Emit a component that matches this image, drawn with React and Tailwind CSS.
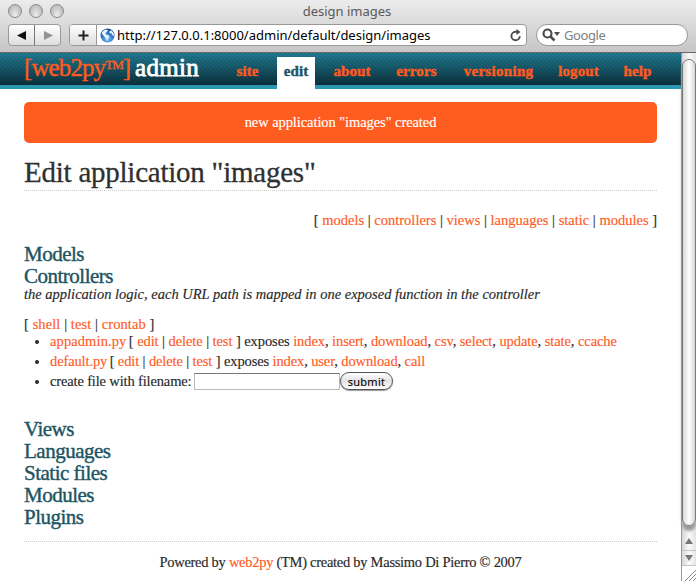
import React from "react";

const serif = "font-['Liberation_Serif',serif]";
const sans = "font-['Noto_Sans',sans-serif]";

function A({ children }) {
  return <a className="text-[#ff5b1f]">{children}</a>;
}

function Links({ items, sep }) {
  return items.map((t, i) => (
    <React.Fragment key={t}>
      {i > 0 && sep}
      <A>{t}</A>
    </React.Fragment>
  ));
}

function Chrome() {
  return (
    <div className={`h-[53px] border-b border-[#686868] bg-linear-to-b from-[#ececec] to-[#c6c6c6] ${sans}`}>
      <div className="flex h-6 items-center">
        <div className="flex w-[100px] gap-[7px] pl-2">
          {[0, 1, 2].map((i) => (
            <span key={i} className="mt-[-2px] h-[14px] w-[14px] rounded-full border border-[#8b8b8b] bg-radial-[at_50%_85%] from-[#eeeeee] to-[#acacac]" />
          ))}
        </div>
        <div className="mt-[-2px] w-[494px] text-center text-[13px] leading-6 text-[#585858]">design images</div>
      </div>
      <div className="flex h-[22px] pl-2">
        <div className="flex h-[22px] w-[53px] rounded-[4px] border border-[#999] bg-linear-to-b from-white to-[#dedede]">
          <div className="flex w-[26px] items-center justify-center border-r border-[#777]">
            <svg width="10" height="10"><path d="M9 1v9L0 5.500z" fill="#111" /></svg>
          </div>
          <div className="flex w-[25px] items-center justify-center">
            <svg width="10" height="10"><path d="M1 1v9l9-4.500z" fill="#929292" /></svg>
          </div>
        </div>
        <div className="ml-2 flex h-[22px] w-[458px] rounded-[4px] border border-[#999] bg-white">
          <div className="flex w-[27px] items-center justify-center rounded-l-[3px] border-r border-[#999] bg-linear-to-b from-white to-[#dedede]">
            <svg width="11" height="11"><path d="M5.500 0.500v10M0.500 5.500h10" stroke="#222" strokeWidth="2" /></svg>
          </div>
          <div className="flex items-center pl-[3px]">
            <svg width="15" height="15" viewBox="0 0 15 15">
              <defs>
                <radialGradient id="globe" cx="50%" cy="75%" r="75%">
                  <stop offset="0" stopColor="#80c8ff" />
                  <stop offset="0.500" stopColor="#347ec9" />
                  <stop offset="1" stopColor="#123d80" />
                </radialGradient>
              </defs>
              <circle cx="7.500" cy="7.500" r="7" fill="url(#globe)" />
              <path d="M2 4l3-2.500 3 .5-1 2-1.500 1 .5 1.500 2 .5 1.500 1.500-1.500 2-1 2.500-1.500-3L4 8 2 6zM9.500 3l2-.5 2 2.500.5 3-1.500-.5-1-2-2-.5z" fill="#e3f3ff" />
            </svg>
          </div>
          <div className="w-[395px] pl-[2px] text-[13px] leading-[20px] text-black">
            http://127.0.0.1:8000/admin/default/design/images
          </div>
          <div className="flex items-center">
            <svg width="12" height="13" viewBox="0 0 12 13" fill="none">
              <path d="M9.800 7.200a4.200 4.200 0 1 1-4.300-4.400h2" stroke="#4c4c4c" strokeWidth="1.900" />
              <path d="M6.500 0l4 3-4 3z" fill="#4c4c4c" />
            </svg>
          </div>
        </div>
        <div className="ml-[9px] flex h-[22px] w-[152px] items-center rounded-full border border-[#999] bg-white pl-[5px]">
          <svg width="19" height="14" viewBox="0 0 19 14">
            <circle cx="5.500" cy="5.500" r="4" fill="none" stroke="#4c4c4c" strokeWidth="2.200" />
            <path d="M8.500 8.500l4 4" stroke="#4c4c4c" strokeWidth="2.500" />
            <path d="M12 4h6l-3 4z" fill="#4c4c4c" />
          </svg>
          <span className="pl-[3px] text-[13px] leading-5 tracking-[-0.4px] text-[#808080]">Google</span>
        </div>
      </div>
    </div>
  );
}

function Header() {
  const nav = [
    ["site", "w-[25px]"],
    ["edit", "w-[38px]"],
    ["about", "w-[38px]"],
    ["errors", "w-[43px]"],
    ["versioning", "w-[73px]"],
    ["logout", "w-[41px]"],
    ["help", "w-[29px]"],
  ];
  const margins = ["ml-0", "ml-[17px]", "ml-[18px]", "ml-6", "ml-6", "ml-[23px]", "ml-6"];
  return (
    <div className="flex h-9 border-b-4 border-[#2a98b0] bg-[repeating-linear-gradient(45deg,rgba(0,0,0,0.13)_0px,rgba(0,0,0,0.13)_1.400px,transparent_1.400px,transparent_2.828px),linear-gradient(#217f96,#0b313d)] pl-6">
      <div className="flex w-[211px] whitespace-nowrap text-[25px] leading-[29px]">
        <span className="w-[111px] tracking-[-0.9px] text-[#ff5b1f] [-webkit-text-stroke:0.4px_#ff5b1f]">[web2py<span className="relative top-[-7px] text-[13px] tracking-[-1px]">TM</span>]</span>
        <span className="tracking-[0.3px] text-white [-webkit-text-stroke:0.8px_white]">admin</span>
      </div>
      {nav.map(([t, w], i) => (
        <div
          key={t}
          className={`${w} ${margins[i]} flex justify-center whitespace-nowrap text-[15px] font-bold leading-[29px] [-webkit-text-stroke:0.4px_currentColor] ${t === "versioning" ? "tracking-[0.3px]" : "tracking-[0.1px]"} ${t === "edit" ? "mt-1 h-8 bg-white text-[#1d5564]" : "mt-1 text-[#ff5b1f]"}`}
        >
          {t}
        </div>
      ))}
    </div>
  );
}

function Scrollbar() {
  return (
    <div className="flex w-[15px] flex-col border-l border-[#999] bg-linear-to-r from-[#d5d5d5] via-[#fafafa] to-[#e4e4e4]">
      <div className="mt-[6px] h-[467px] rounded-full border border-[#777] bg-linear-to-r from-[#d9d9d9] via-white to-[#d6d6d6] shadow-[0_5px_3px_#999]" />
      <div className="mt-[7px] flex h-[18px] items-center justify-center border-b border-[#c5c5c5]">
        <svg width="8" height="7"><path d="M4 0l4 6H0z" fill="#777" /></svg>
      </div>
      <div className="flex h-[15px] items-center justify-center border-b border-[#c5c5c5]">
        <svg width="8" height="7"><path d="M4 6l4-6H0z" fill="#777" /></svg>
      </div>
      <div className="flex h-[15px] items-end justify-end bg-white">
        <svg width="12" height="12"><path d="M1 12L12 1M5 12l7-7M9 12l3-3" stroke="#888" /></svg>
      </div>
    </div>
  );
}

function Heads({ items }) {
  return items.map((t) => (
    <h2 key={t} className="h-[22px] text-[21px] leading-[22px] tracking-[-0.5px] text-[#1d5564] [-webkit-text-stroke:0.4px_#1d5564]">{t}</h2>
  ));
}

export default function App() {
  return (
    <div className="h-[581px] w-[696px] overflow-hidden bg-white">
      <Chrome />
      <div className={`flex h-[528px] ${serif}`}>
        <div className="w-[681px]">
          <Header />
          <main className="ml-6 w-[633px] whitespace-nowrap text-[14.5px] text-[#292929] [-webkit-text-stroke:0.15px_currentColor]">
            <div className="mt-[13px] h-[41px] rounded-[5px] bg-[#ff5c1f] text-center leading-[41px] tracking-[-0.08px] text-white">
              new application "images" created
            </div>
            <h1 className="h-[48px] border-b border-dotted border-[#ccc] pt-[12px] text-[29px] leading-[35px] tracking-[-0.24px] text-[#303030] [-webkit-text-stroke:0.3px_#303030]">Edit application "images"</h1>
            <div className="mt-5 h-5 text-right leading-[18px]">
              [ <Links items={["models", "controllers", "views", "languages", "static", "modules"]} sep=" | " /> ]
            </div>
            <div className="mt-3"><Heads items={["Models", "Controllers"]} /></div>
            <div className="h-4 italic leading-[14px]">the application logic, each URL path is mapped in one exposed function in the controller</div>
            <div className="mt-[13px] h-4 leading-4 tracking-[0.08px]">
              [ <Links items={["shell", "test", "crontab"]} sep=" | " /> ]
            </div>
            <ul className="list-disc pl-[26px] leading-[18px]">
              <li className="h-5 tracking-[-0.08px]">
                <span className="tracking-[0.1px]"><A>appadmin.py</A></span><span className="tracking-[-1.2px]"> </span>[ <Links items={["edit", "delete", "test"]} sep=" | " /> ] exposes{" "}
                <Links items={["index", "insert", "download", "csv", "select", "update", "state", "ccache"]} sep=", " />
              </li>
              <li className="h-5 tracking-[-0.12px]">
                <A>default.py</A><span className="tracking-[-1.2px]"> </span>[ <Links items={["edit", "delete", "test"]} sep=" | " /> ] exposes{" "}
                <Links items={["index", "user", "download", "call"]} sep=", " />
              </li>
              <li className="h-5">
                <div className="flex h-5">
                  <span className="w-[144px] tracking-[-0.15px]">create file with filename:</span>
                  <input className="mt-[1px] h-[17px] w-[146px] border border-[#bbb] border-t-[#777] bg-white" />
                  <button className={`h-[18px] w-[53px] rounded-full border border-[#555] bg-linear-to-b from-white via-[#e3e3e3] to-white text-[11px] leading-[15px] tracking-[0.3px] text-black shadow-[0_1px_1px_#999] [-webkit-text-stroke:0.1px_black] ${sans}`}>submit</button>
                </div>
              </li>
            </ul>
            <div className="mt-[26px]"><Heads items={["Views", "Languages", "Static files", "Modules", "Plugins"]} /></div>
            <footer className="mt-[13px] border-t border-dotted border-[#ccc] pt-[11px] text-center leading-[18px] tracking-[-0.28px]">
              Powered by <A>web2py</A> (TM) created by Massimo Di Pierro © 2007
            </footer>
          </main>
        </div>
        <Scrollbar />
      </div>
    </div>
  );
}
